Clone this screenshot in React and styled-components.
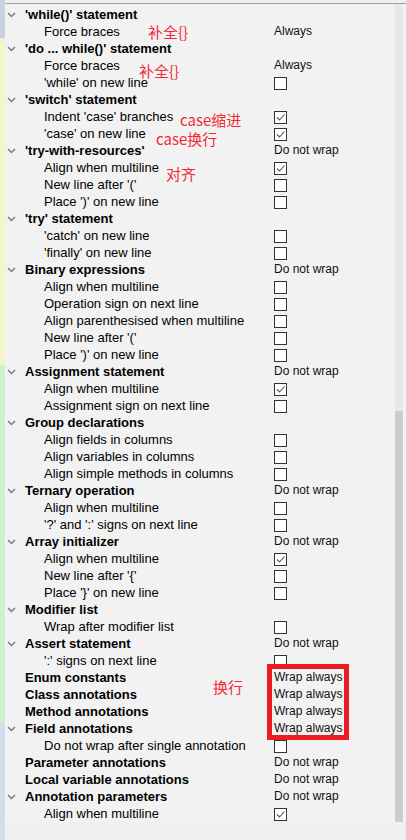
import React from "react"
import styled, { createGlobalStyle } from "styled-components"

const GlobalStyle = createGlobalStyle`
  html, body {
    margin: 0;
    padding: 0;
    background: #f0f0f0;
  }
  body {
    font-family: "Liberation Sans", Arial, sans-serif;
  }
`

const Page = styled.div`
  position: relative;
  width: 406px;
  height: 840px;
  display: flex;
  overflow: hidden;
  background: #f0f0f0;
`

const Strip = styled.div`
  width: 5px;
  display: flex;
  flex-direction: column;
`

const StripPart = styled.div`
  height: ${props => (props.$h ? props.$h + "px" : "auto")};
  flex: ${props => (props.$h ? "none" : 1)};
  background: ${props => props.$color};
`

const Main = styled.div`
  flex: 1;
  display: flex;
  flex-direction: column;
  padding-top: 3px;
`

const Panel = styled.div`
  display: flex;
  border-top: 1px solid #a0a0a0;
  background: #f2f2f2;
`

const List = styled.div`
  flex: 1;
  padding-top: 2px;
`

const Row = styled.div`
  height: 17px;
  display: grid;
  grid-template-columns: 269px 1fr;
  align-items: center;
  font-size: 13px;
  line-height: 17px;
  white-space: nowrap;
  color: #000;
`

const Label = styled.div`
  display: flex;
  align-items: center;
  padding-left: ${props => (props.$child ? "39px" : "0")};
  font-weight: ${props => (props.$child ? 400 : 700)};
`

const ChevronSlot = styled.span`
  width: 20px;
  height: 17px;
  display: flex;
  align-items: center;
  padding-left: 2px;
  box-sizing: border-box;
`

const Value = styled.div`
  display: flex;
  align-items: center;
  font-size: 12px;
  color: #111;
`

const Box = styled.span`
  width: 13px;
  height: 13px;
  box-sizing: border-box;
  border: 1px solid #333;
  background: #fff;
  align-self: flex-start;
  margin-top: 2px;
  display: flex;
  align-items: center;
  justify-content: center;
`

const Scrollbar = styled.div`
  width: 8px;
  margin-right: 3px;
  display: flex;
  flex-direction: column;
  background: #e8e8e8;
`

const Thumb = styled.div`
  margin-top: auto;
  height: 411px;
  background: #cdcdcd;
`

const Note = styled.span`
  position: absolute;
  left: ${props => props.$x}px;
  top: ${props => props.$y}px;
  font-family: "Noto Sans CJK SC", "Liberation Sans", sans-serif;
  font-size: 15px;
  line-height: 15px;
  color: #f02a35;
  white-space: nowrap;
`

const Highlight = styled.div`
  position: absolute;
  left: 267px;
  top: 664px;
  width: 82px;
  height: 76px;
  box-sizing: border-box;
  border: 5px solid #ed1c24;
`

const Chevron = () => (
  <svg width="9" height="6" viewBox="0 0 9 6">
    <polyline points="1,1 4.5,4.5 8,1" fill="none" stroke="#7a7a7a" strokeWidth="1.5" />
  </svg>
)

const Check = () => (
  <svg width="11" height="11" viewBox="0 0 11 11">
    <polyline points="2,5.5 4.5,8 9.5,2.5" fill="none" stroke="#555" strokeWidth="1.1" />
  </svg>
)

const Checkbox = ({ checked }) => <Box>{checked && <Check />}</Box>

// g = group header, i = child item; v = value text, c = checkbox state
const rows = [
  { g: "'while()' statement" },
  { i: "Force braces", v: "Always" },
  { g: "'do ... while()' statement" },
  { i: "Force braces", v: "Always" },
  { i: "'while' on new line", c: false },
  { g: "'switch' statement" },
  { i: "Indent 'case' branches", c: true },
  { i: "'case' on new line", c: true },
  { g: "'try-with-resources'", v: "Do not wrap" },
  { i: "Align when multiline", c: true },
  { i: "New line after '('", c: false },
  { i: "Place ')' on new line", c: false },
  { g: "'try' statement" },
  { i: "'catch' on new line", c: false },
  { i: "'finally' on new line", c: false },
  { g: "Binary expressions", v: "Do not wrap" },
  { i: "Align when multiline", c: false },
  { i: "Operation sign on next line", c: false },
  { i: "Align parenthesised when multiline", c: false },
  { i: "New line after '('", c: false },
  { i: "Place ')' on new line", c: false },
  { g: "Assignment statement", v: "Do not wrap" },
  { i: "Align when multiline", c: true },
  { i: "Assignment sign on next line", c: false },
  { g: "Group declarations" },
  { i: "Align fields in columns", c: false },
  { i: "Align variables in columns", c: false },
  { i: "Align simple methods in columns", c: false },
  { g: "Ternary operation", v: "Do not wrap" },
  { i: "Align when multiline", c: false },
  { i: "'?' and ':' signs on next line", c: false },
  { g: "Array initializer", v: "Do not wrap" },
  { i: "Align when multiline", c: true },
  { i: "New line after '{'", c: false },
  { i: "Place '}' on new line", c: false },
  { g: "Modifier list" },
  { i: "Wrap after modifier list", c: false },
  { g: "Assert statement", v: "Do not wrap" },
  { i: "':' signs on next line", c: false },
  { g: "Enum constants", v: "Wrap always", leaf: true },
  { g: "Class annotations", v: "Wrap always", leaf: true },
  { g: "Method annotations", v: "Wrap always", leaf: true },
  { g: "Field annotations", v: "Wrap always" },
  { i: "Do not wrap after single annotation", c: false },
  { g: "Parameter annotations", v: "Do not wrap", leaf: true },
  { g: "Local variable annotations", v: "Do not wrap", leaf: true },
  { g: "Annotation parameters", v: "Do not wrap" },
  { i: "Align when multiline", c: true },
]

const OptionRow = ({ row }) => (
  <Row>
    {row.g ? (
      <Label>
        <ChevronSlot>{!row.leaf && <Chevron />}</ChevronSlot>
        {row.g}
      </Label>
    ) : (
      <Label $child>{row.i}</Label>
    )}
    <Value>
      {row.v}
      {row.c !== undefined && <Checkbox checked={row.c} />}
    </Value>
  </Row>
)

export default function App() {
  return (
    <Page>
      <GlobalStyle />
      <Strip>
        <StripPart $h={38} $color="#c9d2e2" />
        <StripPart $h={327} $color="#f5f5cb" />
        <StripPart $h={358} $color="#ccf1cc" />
        <StripPart $color="#d5dce9" />
      </Strip>
      <Main>
        <Panel>
          <List>
            {rows.map((row, i) => (
              <OptionRow key={i} row={row} />
            ))}
          </List>
          <Scrollbar>
            <Thumb />
          </Scrollbar>
        </Panel>
      </Main>

      <Note $x={148} $y={24}>补全{"{}"}</Note>
      <Note $x={139} $y={63}>补全{"{}"}</Note>
      <Note $x={180} $y={112}>case缩进</Note>
      <Note $x={156} $y={131}>case换行</Note>
      <Note $x={166} $y={166}>对齐</Note>
      <Note $x={213} $y={679}>换行</Note>
      <Highlight />
    </Page>
  )
}
